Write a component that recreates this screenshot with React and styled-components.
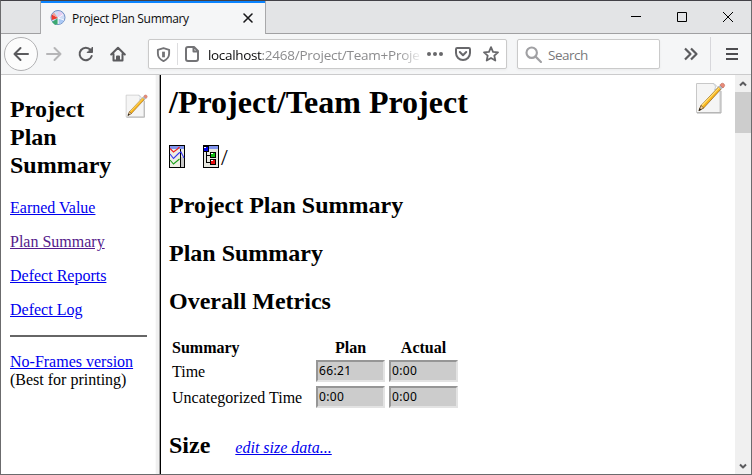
import React from 'react';
import styled, { createGlobalStyle } from 'styled-components';

const Global = createGlobalStyle`
  * { box-sizing: border-box; }
  body { margin: 0; background: #fff; overflow: hidden; }
`;

const Window = styled.div`
  width: 752px;
  height: 475px;
  display: flex;
  flex-direction: column;
  border: 1px solid #6b6b6d;
  border-top-color: #434147;
  background: #fff;
  font-family: 'Open Sans', 'Noto Sans', sans-serif;
  overflow: hidden;
  svg { display: block; flex: none; }
`;

const TitleBar = styled.div`
  height: 33px;
  flex: none;
  display: flex;
  background: #e3e4e6;
`;

const TitleEdge = styled.div`
  width: 39px;
  border-bottom: 1px solid #a0a0a2;
`;

const Tab = styled.div`
  width: 226px;
  display: flex;
  align-items: center;
  padding: 1px 11px 0 9px;
  background: #f5f6f7;
  border: solid #a8a8aa;
  border-width: 0 1px;
  box-shadow: inset 0 2px #0a84ff;
`;

const TabTitle = styled.span`
  flex: 1;
  margin: 2px 0 0 6px;
  font-size: 12px;
  line-height: 18px;
  letter-spacing: -0.33px;
  color: #0c0c0d;
  white-space: nowrap;
`;

const WindowControls = styled.div`
  flex: 1;
  display: flex;
  align-items: center;
  justify-content: flex-end;
  gap: 36px;
  padding-right: 18px;
  border-bottom: 1px solid #a0a0a2;
`;

const Toolbar = styled.div`
  height: 41px;
  flex: none;
  display: flex;
  align-items: center;
  background: #f5f6f7;
  border-bottom: 1px solid #cbcbcc;
`;

const NavButtons = styled.div`
  width: 147px;
  display: flex;
  align-items: center;
  padding-left: 3px;
`;

const BackButton = styled.div`
  width: 34px;
  height: 34px;
  display: grid;
  place-items: center;
  border: 1px solid #b1b1b3;
  border-radius: 50%;
  background: #fcfcfc;
  margin-right: 8px;
`;

const NavIcon = styled.div`
  width: 16px;
  margin-right: 16px;
`;

const Field = styled.div`
  width: ${(p) => p.$width}px;
  height: 30px;
  display: flex;
  align-items: center;
  background: #fff;
  border: 1px solid #cacaca;
  border-radius: 2px;
  box-shadow: 0 1px 3px rgba(0, 0, 0, 0.05);
  margin-right: 10px;
  padding: 0 7px;
`;

const FieldRule = styled.div`
  width: 1px;
  height: 22px;
  background: #dddddf;
  margin: 0 6px 0 6px;
`;

const Address = styled.div`
  width: 215px;
  margin: 2px 5px 0 8px;
  overflow: hidden;
  white-space: nowrap;
  font-size: 13.5px;
  line-height: 22px;
  letter-spacing: -0.24px;
  color: #8c8c8e;
  mask-image: linear-gradient(to right, #000 190px, transparent 215px);
  b { font-weight: 400; color: #0c0c0d; letter-spacing: -0.34px; }
`;

const FieldActions = styled.div`
  display: flex;
  align-items: center;
  gap: 12px;
`;

const SearchText = styled.span`
  margin: 2px 0 0 6px;
  font-size: 13.5px;
  letter-spacing: -0.5px;
  color: #78787b;
`;

const ToolbarEnd = styled.div`
  flex: 1;
  height: 34px;
  display: flex;
  align-items: center;
  padding-left: 13px;
`;

const ToolbarRule = styled.div`
  width: 1px;
  height: 34px;
  background: #d7d7db;
  margin: 0 15px 0 11px;
`;

const Page = styled.div`
  flex: 1;
  min-height: 0;
  display: flex;
  font-family: 'Liberation Serif', 'Times New Roman', serif;
  font-size: 16px;
  line-height: 18px;
  color: #000;
`;

const Sidebar = styled.aside`
  width: 154px;
  padding: 20px 8px 0 9px;
`;

const SidebarHead = styled.div`
  display: flex;
  justify-content: space-between;
  margin-bottom: 20px;
`;

const NoteSlot = styled.div`
  width: 24px;
  flex: none;
  margin: -1px -2px 0 0;
`;

const Heading = styled.h2`
  margin: 0 0 ${(p) => p.$gap ?? 20}px;
  font-size: 24px;
  line-height: 28px;
  font-weight: 700;
`;

const Link = styled.a`
  display: ${(p) => (p.$block ? 'block' : 'inline')};
  margin-bottom: 16px;
  color: ${(p) => (p.$visited ? '#551a8b' : '#0000ee')};
  font-style: ${(p) => (p.$italic ? 'italic' : 'normal')};
  text-decoration: underline;
`;

const Divider = styled.hr`
  height: 2px;
  margin: 0 0 16px;
  border: 0;
  background: #666;
`;

const FrameSplitter = styled.div`
  width: 6px;
  background: #f0f0f0;
  border-left: 1px solid #fafafa;
  border-right: 1px solid #000;
  box-shadow: inset -1px 0 #a0a0a0;
`;

const Main = styled.main`
  flex: 1;
  padding: 9px 0 0 8px;
`;

const TitleRow = styled.div`
  height: 61px;
  display: flex;
  justify-content: space-between;
  padding-right: 8px;
`;

const MainNote = styled.div`
  margin-top: -2px;
`;

const PageTitle = styled.h1`
  margin: 0;
  font-size: 32px;
  line-height: 37px;
  white-space: nowrap;
`;

const IconRow = styled.div`
  height: 46px;
  display: flex;
  gap: 18px;
  font-size: 24px;
  line-height: 24px;
`;

const TreeLink = styled.div`
  display: flex;
  gap: 2px;
`;

const Metrics = styled.div`
  display: grid;
  grid-template-columns: 140px 69px 69px;
  grid-template-rows: 16px 22px 22px;
  gap: 4px;
  margin: 25px 0 23px 3px;
  align-items: center;
`;

const ColumnHead = styled.div`
  font-weight: 700;
  text-align: ${(p) => (p.$center ? 'center' : 'left')};
`;

const RowLabel = styled.div`
  padding-top: 2px;
`;

const Value = styled.div`
  height: 22px;
  padding-left: 1px;
  border: 2px solid;
  border-color: #969696 #e3e3e3 #e3e3e3 #969696;
  background: #ccc;
  font: 12px/18px 'Noto Sans', 'Open Sans', sans-serif;
  letter-spacing: 0.35px;
`;

const SizeRow = styled.div`
  display: flex;
  align-items: baseline;
  gap: 25px;
`;

const Scrollbar = styled.div`
  width: 16px;
  display: flex;
  flex-direction: column;
  background: #f0f0f0;
`;

const ScrollArrow = styled.div`
  height: 17px;
  display: grid;
  place-items: center;
`;

const Thumb = styled.div`
  height: 41px;
  margin-bottom: auto;
  background: #cdcdcd;
`;

const Line = ({ size = 16, color = '#5b5b5e', w = 2, children, box = 16 }) => (
  <svg width={size} height={size} viewBox={`0 0 ${box} ${box}`} fill="none" stroke={color}
    strokeWidth={w} strokeLinecap="round" strokeLinejoin="round">{children}</svg>
);

const Favicon = () => (
  <svg width="16" height="16" viewBox="0 0 16 16">
    <circle cx="8" cy="7.5" r="7" fill="#cfdcf5" stroke="#6f8fc4" />
    <path d="M8 8V1.5A6 6 0 0 1 13.5 5z" fill="#e4cdf0" />
    <path d="M8 8 2 4.5A6.5 6.5 0 0 0 2 10z" fill="#ee3b2d" />
    <path d="M8 8 4 2.5 2 4.5z" fill="#f1a098" />
    <path d="m8 8-6 4 3 3 3-1z" fill="#3ba872" />
    <path d="m8 8 6 2a6 6 0 0 1-5 4z" fill="#a9c8f5" />
    <path d="m8 8 5-3.5M8 8v6M8 8l6 2" stroke="#fff" strokeWidth=".8" />
  </svg>
);

const NotePencil = ({ size }) => (
  <svg width={size} height={size} viewBox="0 0 32 32">
    <path d="M1.500 1.500H19l6 6v23H1.500z" fill="#f5f5f5" stroke="#c8c8c8" />
    <path d="M18 1.500q4 2 1.500 6.500Q22 5.500 25 8" fill="#fff" stroke="#c4ccd4" />
    <path d="M2 31h24V9" fill="none" stroke="#999" strokeWidth=".8" />
    <path d="m4 28.500 2-5L24 4.500l2.300 2.300L8.700 26z" fill="#f9b51c" stroke="#8a5a16" strokeWidth=".7" />
    <path d="M7 23.500 24.500 5.300" stroke="#ffe27a" strokeWidth="1.100" />
    <path d="m4 28.500 2-5L8.700 26z" fill="#f3d3a2" stroke="#694a24" strokeWidth=".7" />
    <path d="m3.700 29 .8-3 2 1.700z" fill="#222" />
    <path d="m23.300 4.800 2-2.100 2.800 2.800-2 2z" fill="#b4bac2" />
    <path d="m25 2.900 1-1.100q1.700-1.200 3 .1t0 3L28 6z" fill="#eb8b78" stroke="#b96756" strokeWidth=".6" />
  </svg>
);

const ChartIcon = () => (
  <svg width="16" height="23" viewBox="0 0 16 23">
    <g shapeRendering="crispEdges">
      <path fill="#eeeee4" d="M0 0h16v23H0z" />
      <path fill="#8194ed" d="M1 1h14v3H1z" />
      <path fill="#c8c8c8" d="M12 12h3v10h-3z" />
      <path fill="none" stroke="#000" d="M.5.5h15v22H.5zM11.500 4v18" />
    </g>
    <path d="m1 3.500 3.500 3.500 4-3 2-2" fill="none" stroke="#f02020" strokeWidth="1.100" />
    <path d="m1 9 3.500 4.500L10 8l2-1 3 6" fill="none" stroke="#3434f0" strokeWidth="1.100" />
    <path d="m1 15 3.500 4 6-5" fill="none" stroke="#18a018" strokeWidth="1.100" />
  </svg>
);

const TreeIcon = () => (
  <svg width="16" height="23" viewBox="0 0 16 23" shapeRendering="crispEdges">
    <path fill="#e7e7df" d="M0 0h16v23H0z" />
    <path fill="#8194ed" d="M6 1h9v3H6z" />
    <path fill="none" stroke="#000" d="M.5.5h15v22H.5zM3.500 6v12M4 10.500h4M4 17.500h4" />
    <path fill="#000" d="M0 1h6v6H0zM7 7h6v6H7zM7 14h6v6H7z" />
    <path fill="#0505e8" d="M1 2h4v4H1z" />
    <path fill="#14bd14" d="M8 8h4v4H8z" />
    <path fill="#e81010" d="M8 15h4v4H8z" />
    <path fill="#fff" d="M1 2h2v1H1zM8 8h2v1H8zM8 15h2v1H8z" />
  </svg>
);

const links = [['Earned Value'], ['Plan Summary', true], ['Defect Reports'], ['Defect Log']];
const metrics = [['Time', '66:21', '0:00'], ['Uncategorized Time', '0:00', '0:00']];

const BrowserChrome = () => (
  <>
    <TitleBar>
      <TitleEdge />
      <Tab>
        <Favicon />
        <TabTitle>Project Plan Summary</TabTitle>
        <Line size={12} box={12} color="#18181a" w={1.6}><path d="m2 2 8 8m0-8-8 8" /></Line>
      </Tab>
      <WindowControls>
        <svg width="10" height="10"><path d="M0 4.500h10" stroke="#000" /></svg>
        <svg width="10" height="10"><path d="M.5.5h9v9h-9z" fill="none" stroke="#000" /></svg>
        <svg width="10" height="10"><path d="m0 0 10 10M10 0 0 10" stroke="#000" /></svg>
      </WindowControls>
    </TitleBar>
    <Toolbar>
      <NavButtons>
        <BackButton><Line><path d="M15 8H1.500m6-6-6 6 6 6" /></Line></BackButton>
        <NavIcon><Line color="#b5b5b7"><path d="M1 8h13.500m-6-6 6 6-6 6" /></Line></NavIcon>
        <NavIcon><Line><path d="M13.700 10A6.200 6.200 0 1 1 12.600 4" /><path d="M14.500 1.500v5h-5z" fill="#5b5b5e" strokeWidth="1" /></Line></NavIcon>
        <NavIcon><Line><path d="M1.200 8.500 8 1.700l6.800 6.800M3.500 8v6.500h9V8" /><path d="M7 14v-3.500h2V14" /></Line></NavIcon>
      </NavButtons>
      <Field $width={359}>
        <Line size={15} color="#737376"><path d="M8 1.200 14 3v4c0 4-2.500 6.500-6 8-3.500-1.500-6-4-6-8V3z" /><path d="M8 5v6" strokeWidth="3" strokeLinecap="butt" /></Line>
        <FieldRule />
        <Line color="#737376"><path d="M4 1h6l4 4v8q0 2-2 2H4q-2 0-2-2V3q0-2 2-2zM9.500 1v4.500H14" /></Line>
        <Address><b>localhost</b>:2468/Project/Team+Proje</Address>
        <FieldActions>
          <svg width="16" height="16" fill="#68686b"><circle cx="2" cy="8" r="2" /><circle cx="8" cy="8" r="2" /><circle cx="14" cy="8" r="2" /></svg>
          <Line color="#68686b"><path d="M2.200 2h11.600q1.200 0 1.200 1.200V7A7 7 0 0 1 1 7V3.200Q1 2 2.200 2zM4.800 6 8 9.200 11.200 6" /></Line>
          <Line color="#68686b" w={1.8}><path d="m8 1.200 2 4.600 5 .5-3.700 3.300 1 4.900L8 12l-4.300 2.500 1-4.900L1 6.300l5-.5z" /></Line>
        </FieldActions>
      </Field>
      <Field $width={143}>
        <Line size={17} color="#a0a0a3"><circle cx="6.300" cy="6.300" r="4.900" /><path d="m10 10 5 5" /></Line>
        <SearchText>Search</SearchText>
      </Field>
      <ToolbarEnd>
        <Line w={2.2}><path d="m2 2.500 5.500 5.500L2 13.500m6-11L13.500 8 8 13.500" strokeLinecap="butt" /></Line>
        <ToolbarRule />
        <svg width="12" height="12"><path d="M0 1h12M0 6h12M0 11h12" stroke="#4d4d50" strokeWidth="2" /></svg>
      </ToolbarEnd>
    </Toolbar>
  </>
);

export default function App() {
  return (
    <Window>
      <Global />
      <BrowserChrome />
      <Page>
        <Sidebar>
          <SidebarHead>
            <Heading $gap={0}>Project<br />Plan<br />Summary</Heading>
            <NoteSlot><NotePencil size={24} /></NoteSlot>
          </SidebarHead>
          {links.map(([label, visited]) => (
            <Link key={label} $block $visited={visited}>{label}</Link>
          ))}
          <Divider />
          <Link>No-Frames version</Link><br />(Best for printing)
        </Sidebar>
        <FrameSplitter />
        <Main>
          <TitleRow>
            <PageTitle>/Project/Team Project</PageTitle>
            <MainNote><NotePencil size={32} /></MainNote>
          </TitleRow>
          <IconRow>
            <ChartIcon />
            <TreeLink><TreeIcon />/</TreeLink>
          </IconRow>
          <Heading>Project Plan Summary</Heading>
          <Heading>Plan Summary</Heading>
          <Heading $gap={0}>Overall Metrics</Heading>
          <Metrics>
            <ColumnHead>Summary</ColumnHead>
            <ColumnHead $center>Plan</ColumnHead>
            <ColumnHead $center>Actual</ColumnHead>
            {metrics.map(([name, plan, actual]) => (
              <React.Fragment key={name}>
                <RowLabel>{name}</RowLabel>
                <Value>{plan}</Value>
                <Value>{actual}</Value>
              </React.Fragment>
            ))}
          </Metrics>
          <SizeRow>
            <Heading $gap={0}>Size</Heading>
            <Link $italic>edit size data...</Link>
          </SizeRow>
        </Main>
        <Scrollbar>
          <ScrollArrow><Line size={8} box={8} w={2}><path d="m1 5.500 3-3 3 3" strokeLinecap="butt" /></Line></ScrollArrow>
          <Thumb />
          <ScrollArrow><Line size={8} box={8} w={2}><path d="m1 2.500 3 3 3-3" strokeLinecap="butt" /></Line></ScrollArrow>
        </Scrollbar>
      </Page>
    </Window>
  );
}
